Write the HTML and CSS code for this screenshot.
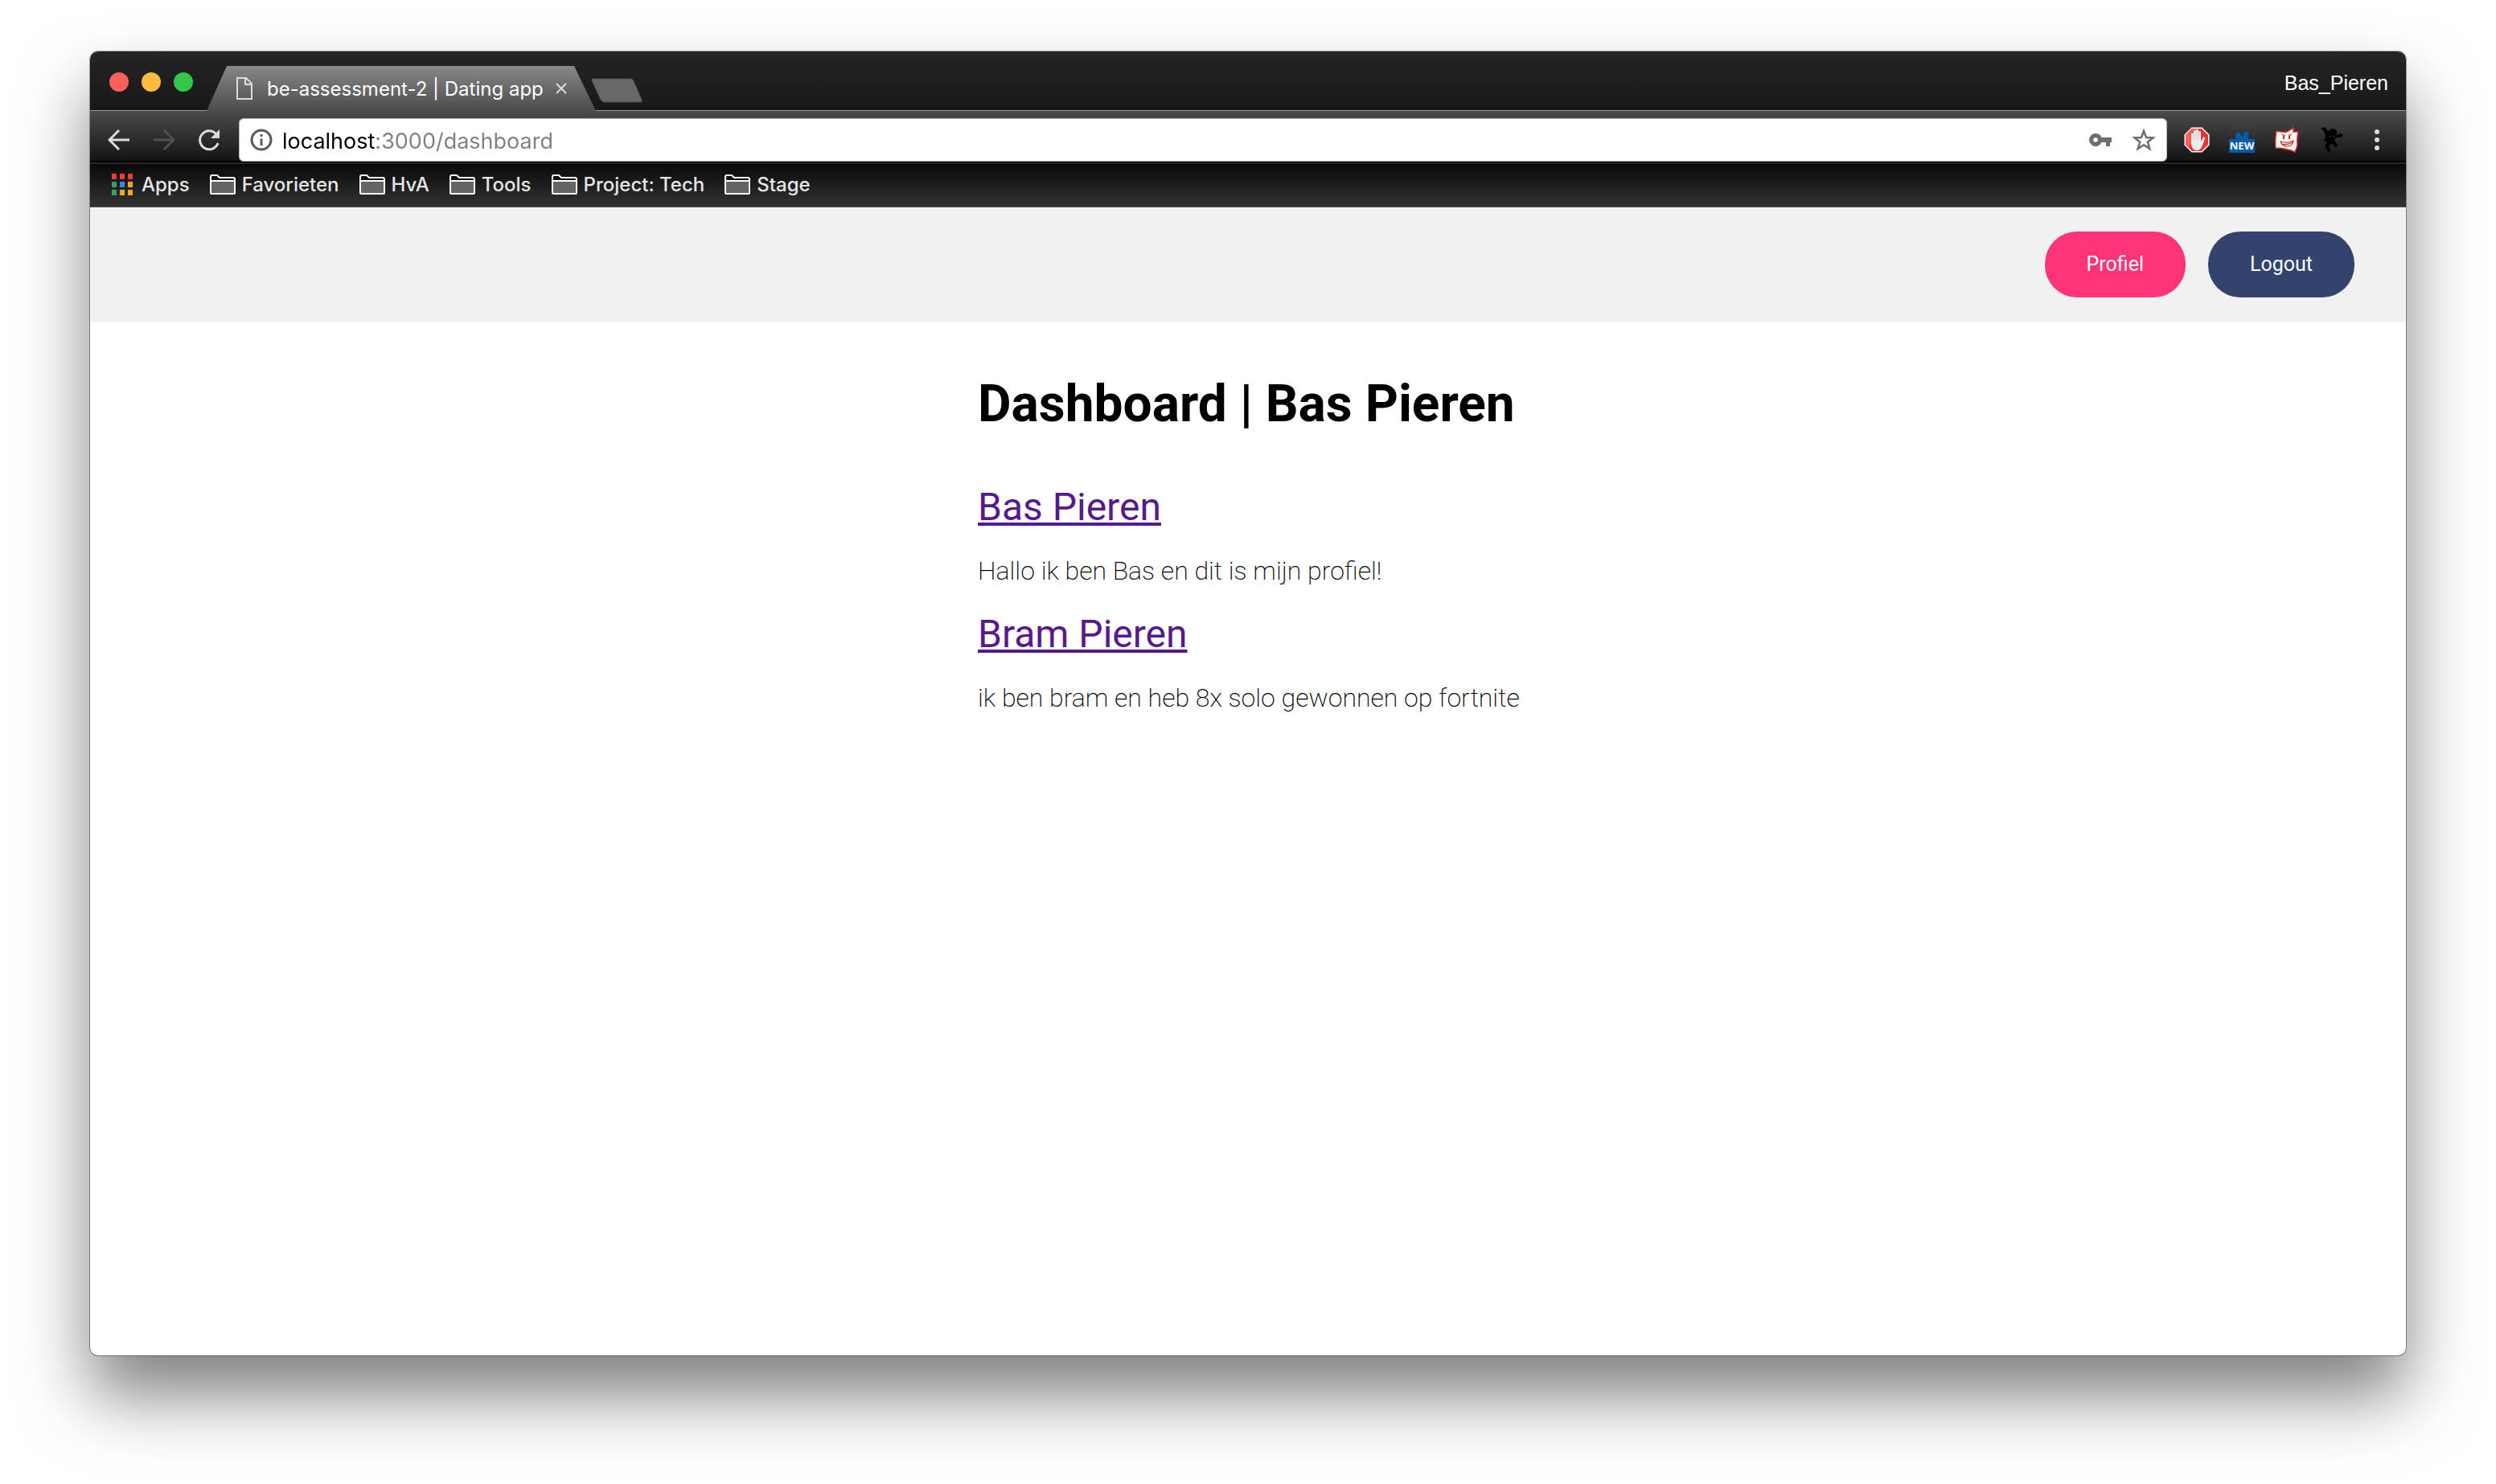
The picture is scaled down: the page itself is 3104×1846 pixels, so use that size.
FILE: index.html
```html
<!DOCTYPE html>
<html lang="nl">
<head>
<meta charset="utf-8">
<title>be-assessment-2 | Dating app</title>
<link rel="stylesheet" href="styles.css">
</head>
<body>
<svg class="symbols" aria-hidden="true">
  <symbol id="folder" viewBox="0 0 32 26">
    <path d="M1 3Q1 1 3 1H9L12 4H29Q31 4 31 6V23Q31 24 30 24H2Q1 24 1 23Z" fill="#111" stroke="#fff" stroke-width="2"/>
    <path d="M2 8H30V23H2Z" fill="#656565"/>
    <path d="M1 8H31" stroke="#fff" stroke-width="2"/>
  </symbol>
</svg>
<div class="window">
  <div class="tabstrip">
    <div class="lights">
      <button class="light close" aria-label="Close"></button>
      <button class="light minimize" aria-label="Minimize"></button>
      <button class="light zoom" aria-label="Zoom"></button>
    </div>
    <div class="tab">
      <svg class="tab-file" viewBox="0 0 20 28" fill="none" stroke="#dcdcdc" stroke-width="2"><path d="M1 1H12L19 8V27H1Z"/><path d="M11 1V9H19"/></svg>
      <span class="tab-title">be-assessment-2 | Dating app</span>
      <button class="tab-close" aria-label="Close tab"><svg width="14" height="14" viewBox="0 0 14 14" stroke="#dcdcdc" stroke-width="2"><path d="M1 1L13 13M13 1L1 13"/></svg></button>
    </div>
    <button class="new-tab" aria-label="New tab"><svg width="64" height="31" viewBox="0 0 64 31"><path d="M3 1H49Q52 1 53 4L63 27Q64 30 61 30H17Q14 30 12 27L1 3Q0 1 3 1Z" fill="#686868" stroke="#4e4e4e"/></svg></button>
    <span class="user">Bas_Pieren</span>
  </div>

  <div class="toolbar">
    <div class="nav">
      <button aria-label="Back"><svg width="28" height="28" viewBox="0 0 28 28" fill="none" stroke="#dcdcdc" stroke-width="3"><path d="M27 14H3M14 2L2 14L14 26"/></svg></button>
      <button aria-label="Forward" disabled><svg width="28" height="28" viewBox="0 0 28 28" fill="none" stroke="#505050" stroke-width="3"><path d="M1 14H25M14 2L26 14L14 26"/></svg></button>
      <button aria-label="Reload"><svg width="28" height="28" viewBox="0 0 28 28"><path d="M23 7A11.500 11.500 0 1 0 25 18" fill="none" stroke="#dcdcdc" stroke-width="3"/><path d="M27 1V12H16Z" fill="#dcdcdc"/></svg></button>
    </div>
    <form class="omnibox">
      <svg width="28" height="28" viewBox="0 0 28 28"><circle cx="14" cy="14" r="12" fill="none" stroke="#5a5a5a" stroke-width="3"/><path d="M12.500 7H15.500V10H12.500ZM12.500 12.500H15.500V21H12.500Z" fill="#5a5a5a"/></svg>
      <input class="url" type="text" aria-label="Address" value="localhost:3000/dashboard">
      <button type="button" aria-label="Passwords"><svg width="28" height="28" viewBox="0 0 28 28"><path fill-rule="evenodd" d="M8 6A8 8 0 1 0 15.500 17H21V22H26V17H28V11H15.500A8 8 0 0 0 8 6ZM8 11.200A2.800 2.800 0 1 1 8 16.800A2.800 2.800 0 1 1 8 11.200Z" fill="#6e6e6e"/></svg></button>
      <button type="button" aria-label="Bookmark"><svg width="30" height="30" viewBox="0 0 30 30"><path d="M15 4L18 12L26.500 12.300L19.800 17.700L22.300 26L15 21.300L7.700 26L10.200 17.700L3.500 12.300L12 12Z" fill="none" stroke="#6e6e6e" stroke-width="2.500"/></svg></button>
    </form>
    <div class="extensions">
      <button aria-label="Ad blocker"><svg width="32" height="32" viewBox="0 0 32 32"><path d="M9.500 .5H22.500L31.500 9.500V22.500L22.500 31.500H9.500L.5 22.500V9.500Z" fill="#fff"/><path d="M10 2H22L30 10V22L22 30H10L2 22V10Z" fill="#e8322c"/><path d="M2 20V10L10 2H18L6 26Z" fill="#fb5f59"/><path d="M9 8.500Q10.500 7 12 8.500V5Q13.500 3 15 5V4Q16.500 2 18 4V6Q19.500 4 21 6V18L24 12.500Q26.500 12 26 14.500L22.500 24Q20.500 29 16 29Q10 29 9 22Z" fill="#ececec"/><path d="M12 9V16M15 6V15.500M18 6V16" stroke="#bbb" stroke-width=".7"/></svg></button>
      <button aria-label="New"><svg width="32" height="32" viewBox="0 0 32 32"><path d="M1 10V3Q1 1 3 1H29Q31 1 31 3V10" fill="none" stroke="#464646" stroke-dasharray="6 4"/><path d="M8 15V9L12 6L18 13V6H24V15Z" fill="#075ba8"/><path d="M0 15H32V32H0Z" fill="#075ba8"/><text x="16" y="28" text-anchor="middle" class="new-label">NEW</text></svg></button>
      <button aria-label="Comic mask"><svg width="32" height="32" viewBox="0 0 32 32"><path d="M3 5Q12 7 16 6L24 1L24 6L30 6Q28 14 29 22Q28 27 26 31Q14 26 2 26Q1 15 3 5Z" fill="#fff" stroke="#d93024" stroke-width="1.500"/><path d="M9 9L14 11M22 9L18 11M8 18Q16 21 24 17Q23 24 16 24Q10 24 8 18ZM9 21Q16 23 23 19" fill="none" stroke="#cc291f" stroke-width="1.200"/><path d="M12 11V15M19 11V15" stroke="#cc291f" stroke-width="2"/></svg></button>
      <button aria-label="Ninja"><svg width="32" height="32" viewBox="0 0 32 32"><path d="M2 2L7 0L10 4L12 5Q15 0 20 3Q24 6 21 10L25 9L26 7L28 9L30 9L29 12L25 13L20 13L19 17Q24 21 22 25L20 25L18 22L15 21L12 24L14 30L12 32L7 25L10 18L6 18L8 12L7 8L5 4Z" fill="#000"/><path d="M13 11L15 12M17 12L19 11" stroke="#444"/></svg></button>
      <button aria-label="Menu"><svg width="32" height="32" viewBox="0 0 32 32" fill="#dcdcdc"><circle cx="16" cy="6" r="3"/><circle cx="16" cy="16" r="3"/><circle cx="16" cy="26" r="3"/></svg></button>
    </div>
  </div>

  <nav class="bookmarks">
    <a href="#apps" class="apps"><svg width="26" height="27" viewBox="0 0 26 27"><path d="M0 0H6V7H0ZM10 0H16V7H10ZM20 0H26V7H20Z" fill="#f83a36"/><path d="M0 10H6V17H0ZM0 20H6V27H0Z" fill="#39a15b"/><path d="M10 10H16V17H10Z" fill="#2c8cf8"/><path d="M20 10H26V17H20ZM10 20H16V27H10ZM20 20H26V27H20Z" fill="#f4a426"/></svg>Apps</a>
    <a href="#favorieten"><svg width="32" height="26"><use href="#folder"/></svg>Favorieten</a>
    <a href="#hva"><svg width="32" height="26"><use href="#folder"/></svg>HvA</a>
    <a href="#tools"><svg width="32" height="26"><use href="#folder"/></svg>Tools</a>
    <a href="#project-tech"><svg width="32" height="26"><use href="#folder"/></svg>Project: Tech</a>
    <a href="#stage"><svg width="32" height="26"><use href="#folder"/></svg>Stage</a>
  </nav>

  <div class="page">
    <header class="page-header">
      <button class="pill profile">Profiel</button>
      <button class="pill logout">Logout</button>
    </header>
    <main class="content">
      <h1>Dashboard | Bas Pieren</h1>
      <ul class="people">
        <li><a href="#bas">Bas Pieren</a><p>Hallo ik ben Bas en dit is mijn profiel!</p></li>
        <li><a href="#bram">Bram Pieren</a><p>ik ben bram en heb 8x solo gewonnen op fortnite</p></li>
      </ul>
    </main>
  </div>
</div>
</body>
</html>
```
FILE: styles.css
```css
* {
  box-sizing: border-box;
}

body {
  margin: 0;
  min-height: 100vh;
  padding: 64px 112px 160px;
  display: flex;
  background: #fff;
  font-family: Inter, sans-serif;
}

button {
  padding: 0;
  border: 0;
  background: none;
  display: flex;
}

svg {
  flex: none;
  display: block;
}

.symbols {
  display: none;
}

.window {
  flex: 1;
  min-width: 0;
  display: flex;
  flex-direction: column;
  border-radius: 10px;
  overflow: hidden;
  background: #fff;
  box-shadow: 0 0 0 1px rgba(0, 0, 0, 0.35), 0 50px 86px rgba(0, 0, 0, 0.5);
}

/* Tab strip */

.tabstrip {
  height: 74px;
  display: flex;
  align-items: flex-end;
  background: linear-gradient(#252525, #181818);
  border-bottom: 1px solid #9a9a9a;
}

.lights {
  display: flex;
  align-self: center;
  gap: 16px;
  margin: 2px 17px 0 24px;
}

.light {
  width: 24px;
  height: 24px;
  border-radius: 50%;
}

.close {
  background: #fc605b;
}

.minimize {
  background: #fdbc40;
}

.zoom {
  background: #34c84a;
}

.tab {
  width: 484px;
  height: 56px;
  margin-bottom: -1px;
  padding: 0 36px 0 37px;
  display: flex;
  align-items: center;
  clip-path: polygon(25px 0, 457px 0, 484px 100%, 0 100%);
  background: linear-gradient(#888, #4b4b4b);
  color: #fff;
}

.tab-file {
  width: 20px;
  height: 28px;
}

.tab-title {
  flex: 1;
  margin-left: 18px;
  font-size: 24px;
  font-weight: 400;
  white-space: nowrap;
}

.new-tab {
  margin: 0 0 9px -6px;
}

.user {
  margin-left: auto;
  padding: 0 22px 20px;
  color: #fff;
  font: 25px/28px "Liberation Sans", Arial, sans-serif;
}

/* Toolbar */

.toolbar {
  height: 66px;
  padding: 9px 20px 3px 22px;
  display: flex;
  align-items: center;
  background: linear-gradient(#4b4b4b, #141414 62px, #000 62px, #000 64px, #272727 64px);
}

.nav {
  display: flex;
  gap: 28px;
}

.omnibox {
  flex: 1;
  height: 54px;
  margin: 0 21px 0 23px;
  padding: 0 13px;
  display: flex;
  align-items: center;
  gap: 25px;
  border: 1px solid #b4b4b4;
  border-radius: 6px;
  background: #fff;
}

.url {
  flex: 1;
  min-width: 0;
  height: 44px;
  margin-left: -13px;
  padding: 2px 0 0;
  border: 0;
  outline: 0;
  background: linear-gradient(90deg, #000 116px, #808080 116px) text;
  color: transparent;
  font: 27px/42px Inter, sans-serif;
}

.extensions {
  display: flex;
  gap: 24px;
}

.new-label {
  fill: #fff;
  font: bold 13px "Open Sans", sans-serif;
}

/* Bookmarks bar */

.bookmarks {
  height: 54px;
  padding: 0 27px 2px;
  display: flex;
  align-items: center;
  gap: 25px;
  border-bottom: 1px solid #555;
  background: linear-gradient(#090909, #333);
}

.bookmarks a {
  display: flex;
  align-items: center;
  gap: 8px;
  color: #e6e6e6;
  font-size: 24px;
  font-weight: 500;
  text-decoration: none;
}

.bookmarks .apps {
  gap: 11px;
}

/* Page */

.page {
  flex: 1;
  font-family: Roboto, sans-serif;
}

.page-header {
  padding: 30px 64px;
  display: flex;
  justify-content: flex-end;
  gap: 28px;
  background: #f1f1f1;
}

.pill {
  height: 82px;
  padding: 0 52px;
  align-items: center;
  border-radius: 40px;
  color: #fff;
  font: 25px/32px Roboto, sans-serif;
}

.profile {
  background: #ff3377;
}

.logout {
  background: #33436e;
}

.content {
  max-width: 672px;
  margin: 0 auto;
  padding: 65px 0;
}

h1 {
  margin: 0 0 62px;
  font-size: 64px;
  line-height: 76px;
  font-weight: 700;
  white-space: nowrap;
}

.people {
  margin: 0;
  padding: 0;
  list-style: none;
}

.people a {
  display: inline-block;
  color: #551a8b;
  font-size: 48px;
  line-height: 56px;
}

.people p {
  margin: 32px 0;
  color: #000;
  font-size: 32px;
  line-height: 38px;
  font-weight: 200;
  white-space: nowrap;
}
```
